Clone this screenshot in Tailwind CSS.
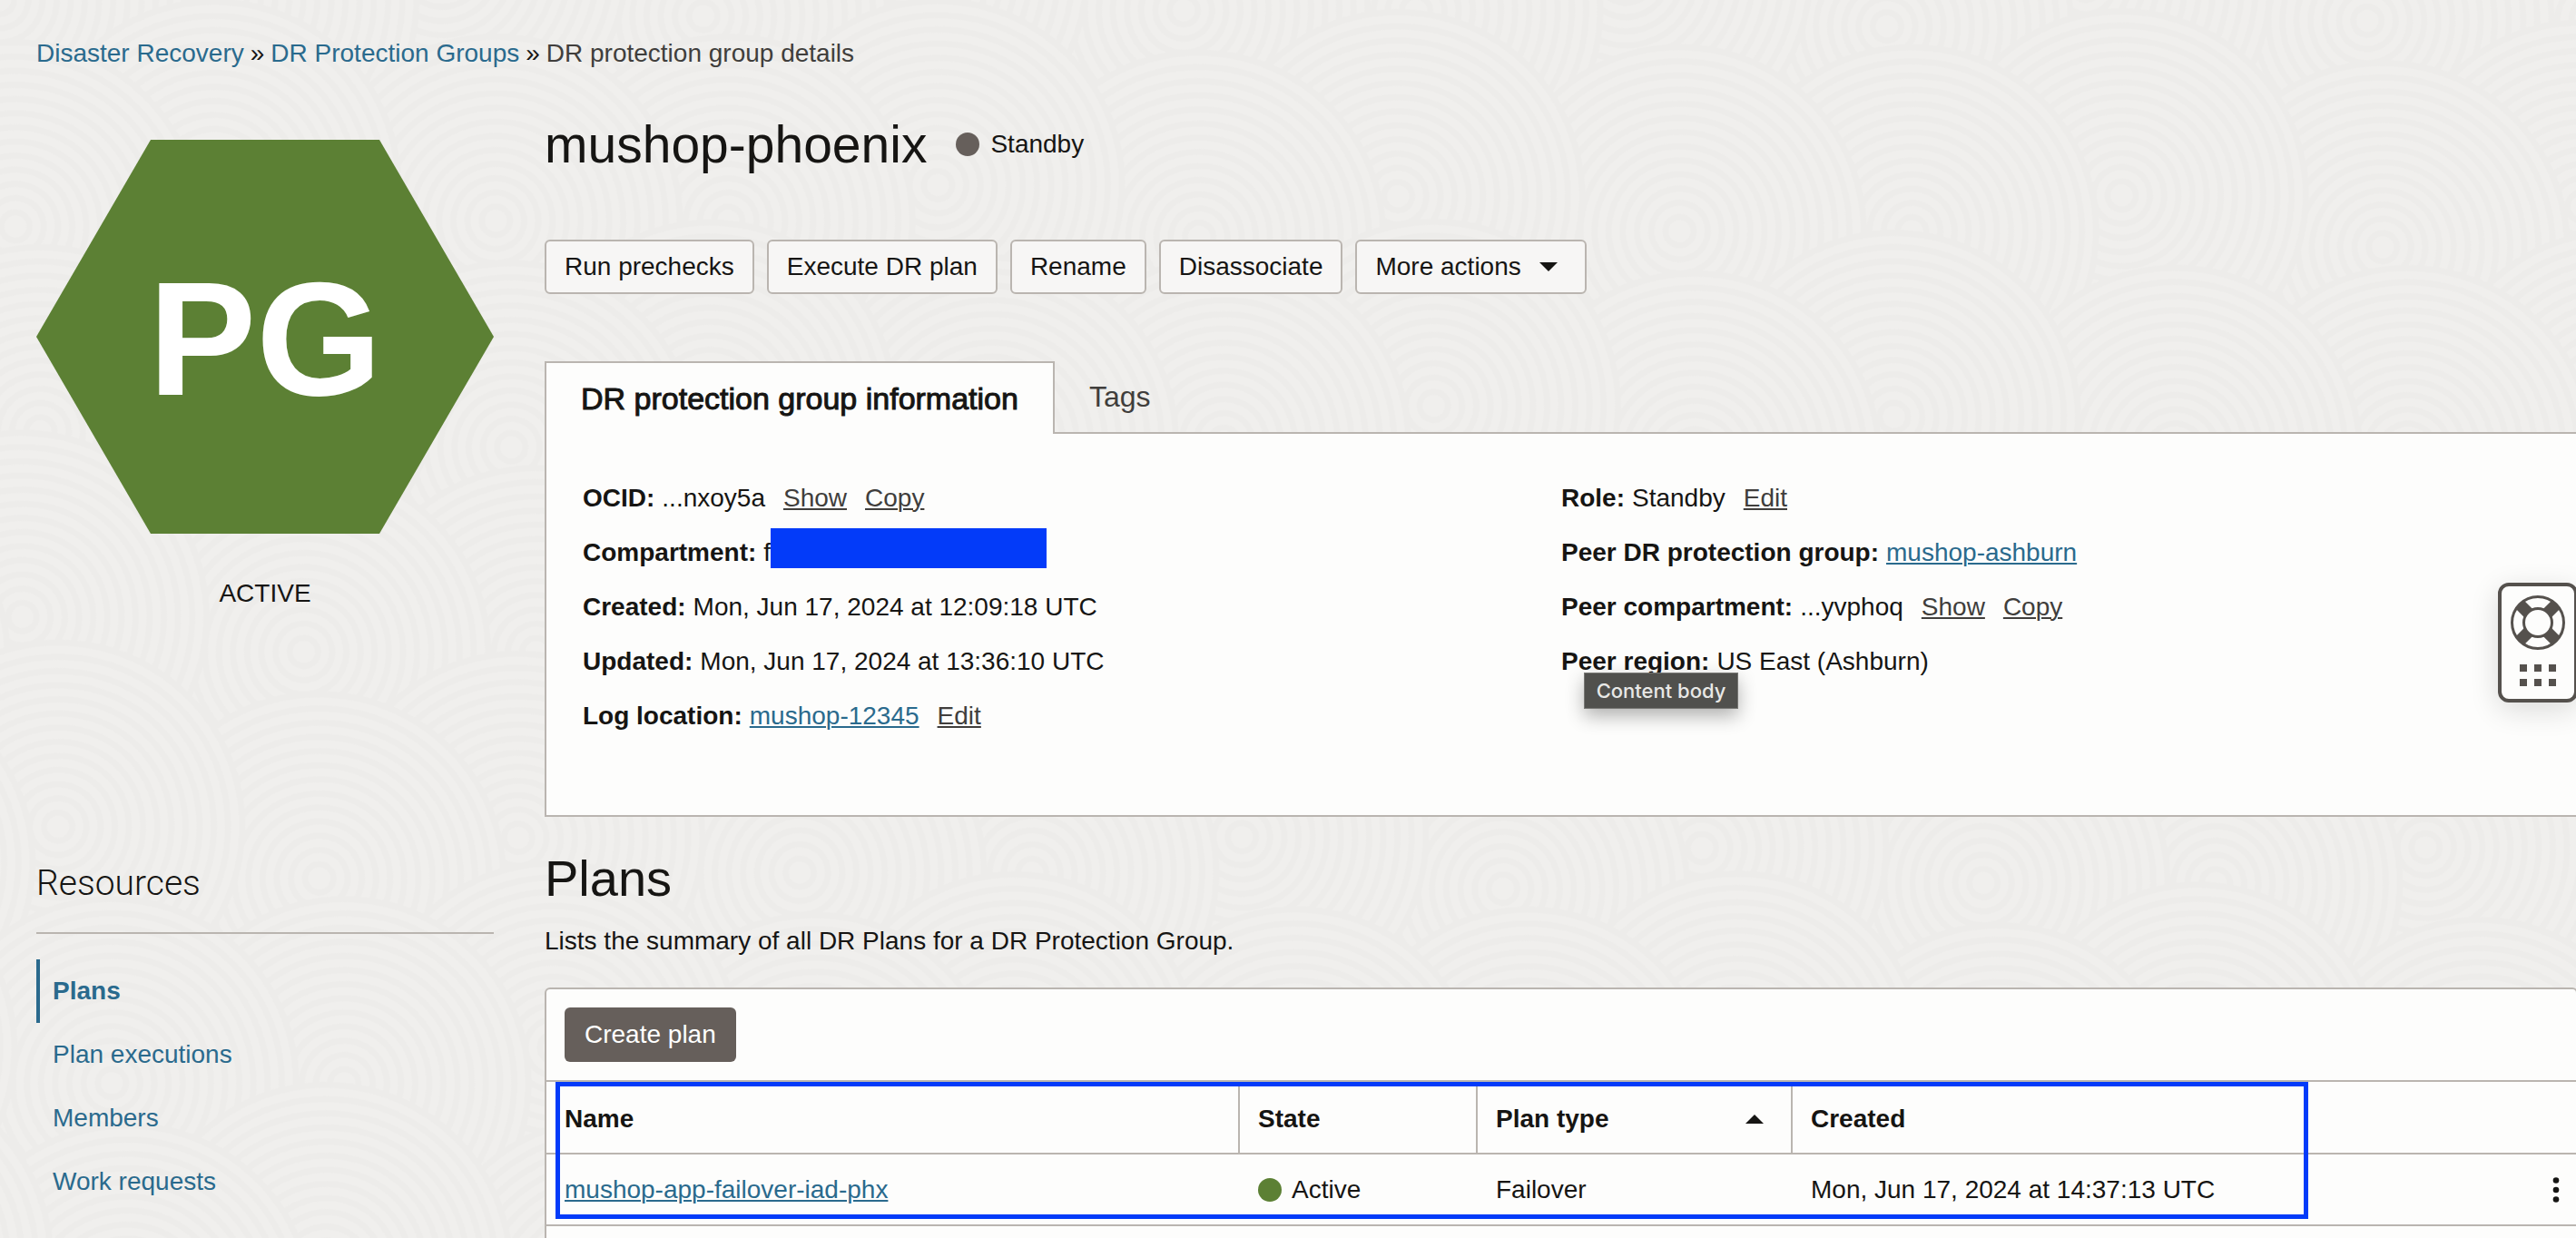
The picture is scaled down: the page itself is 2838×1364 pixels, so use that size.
<!DOCTYPE html>
<html lang="en">
<head>
<meta charset="utf-8">
<title>DR protection group details</title>
<script src="https://cdn.jsdelivr.net/npm/@tailwindcss/browser@4"></script>
</head>
<body class="bg-[#f0efed] text-[#161513] text-[28px] leading-10 font-['Helvetica_Neue','Liberation_Sans',Arial,sans-serif]">
<div class="relative isolate flex min-h-screen flex-col overflow-hidden pl-10">

  <!-- Page texture: overlapping discs of faint rings -->
  <svg class="absolute inset-0 -z-10 h-full w-full" aria-hidden="true">
    <defs>
      <g id="disc" fill="#f0efed" stroke="#edecea" stroke-width="5">
        <circle r="156"/><circle r="144"/><circle r="132"/><circle r="120"/><circle r="108"/><circle r="96"/><circle r="84"/><circle r="72"/><circle r="60"/><circle r="48"/><circle r="36"/><circle r="24"/><circle r="12"/>
      </g>
      <pattern id="rings" width="460" height="400" patternUnits="userSpaceOnUse" patternTransform="rotate(24) scale(1.3)">
        <use href="#disc" x="0" y="0"/><use href="#disc" x="460" y="0"/>
        <use href="#disc" x="230" y="70"/>
        <use href="#disc" x="90" y="170"/><use href="#disc" x="550" y="170"/>
        <use href="#disc" x="330" y="220"/><use href="#disc" x="-130" y="220"/>
        <use href="#disc" x="180" y="320"/>
        <use href="#disc" x="0" y="400"/><use href="#disc" x="460" y="400"/>
        <use href="#disc" x="230" y="470"/>
      </pattern>
    </defs>
    <rect width="100%" height="100%" fill="url(#rings)"/>
  </svg>

  <nav aria-label="Breadcrumb" class="mt-[39px]">
    <ol class="flex gap-[7px]">
      <li><a href="#" class="text-[#2a6a8d]">Disaster Recovery</a></li>
      <li aria-hidden="true">»</li>
      <li><a href="#" class="text-[#2a6a8d]">DR Protection Groups</a></li>
      <li aria-hidden="true">»</li>
      <li class="text-[#403e3c]">DR protection group details</li>
    </ol>
  </nav>

  <div class="mt-12 grid flex-1 grid-cols-[504px_1fr] gap-14">
    <aside>
      <svg class="mt-[27px] block h-[434px] w-full" viewBox="0 0 504 434" role="img" aria-label="PG">
        <path d="M126 0H378L504 217L378 434H126L0 217Z" fill="#5c8034"/>
        <text x="252" y="281" text-anchor="middle" font-size="178" font-weight="700" fill="#fff">PG</text>
      </svg>
      <p class="mt-[46px] text-center">ACTIVE</p>

      <h2 class="mt-[275px] border-b-2 border-[#bab5b0] pb-[30px] font-['Roboto',sans-serif] text-[39px] leading-12 font-light">Resources</h2>
      <nav aria-label="Resources" class="mt-7 flex flex-col text-[#2a6a8d]">
        <a href="#" aria-current="page" class="border-l-4 border-[#2a6a8d] pl-[14px] font-bold leading-[70px]">Plans</a>
        <a href="#" class="border-l-4 border-transparent pl-[14px] leading-[70px]">Plan executions</a>
        <a href="#" class="border-l-4 border-transparent pl-[14px] leading-[70px]">Members</a>
        <a href="#" class="border-l-4 border-transparent pl-[14px] leading-[70px]">Work requests</a>
      </nav>
    </aside>

    <main class="-mr-[2px] flex min-w-0 flex-col">
      <div class="flex items-center gap-8">
        <h1 class="text-[57px] leading-16">mushop-phoenix</h1>
        <p class="flex items-center gap-3"><span class="size-[26px] rounded-full bg-[#665f5b]"></span>Standby</p>
      </div>

      <div class="mt-[73px] flex gap-[14px]">
        <button class="h-[60px] rounded-md border-2 border-[#bab5b0] bg-[#f7f6f5] px-5">Run prechecks</button>
        <button class="h-[60px] rounded-md border-2 border-[#bab5b0] bg-[#f7f6f5] px-5">Execute DR plan</button>
        <button class="h-[60px] rounded-md border-2 border-[#bab5b0] bg-[#f7f6f5] px-5">Rename</button>
        <button class="h-[60px] rounded-md border-2 border-[#bab5b0] bg-[#f7f6f5] px-5">Disassociate</button>
        <button class="flex h-[60px] items-center gap-5 rounded-md border-2 border-[#bab5b0] bg-[#f7f6f5] pr-[30px] pl-5">More actions
          <svg class="h-[10px] w-5" viewBox="0 0 20 10" aria-hidden="true"><path d="M0 0H20L10 10Z" fill="#161513"/></svg>
        </button>
      </div>

      <div role="tablist" class="relative mt-[74px] -mb-[2px] flex">
        <button role="tab" aria-selected="true" class="h-20 border-2 border-b-0 border-[#bab5b0] bg-[#fdfdfc] px-[38px] text-[34px] [-webkit-text-stroke:1px_#161513]">DR protection group information</button>
        <button role="tab" aria-selected="false" class="h-[78px] px-[38px] text-[32px] text-[#403e3c]">Tags</button>
      </div>

      <section class="grid grid-cols-2 border-2 border-[#bab5b0] bg-[#fdfdfc] px-10 pt-[41px] pb-[79px] leading-[60px]">
        <dl>
          <div class="flex gap-2"><dt class="font-bold">OCID:</dt><dd class="flex gap-5">...nxoy5a <button class="text-[#403e3c] underline decoration-2 underline-offset-2">Show</button><button class="text-[#403e3c] underline decoration-2 underline-offset-2">Copy</button></dd></div>
          <div class="flex gap-2"><dt class="font-bold">Compartment:</dt><dd class="flex">f<span class="mt-[3px] h-11 w-[304px] bg-[#033bf9]"></span></dd></div>
          <div class="flex gap-2"><dt class="font-bold">Created:</dt><dd>Mon, Jun 17, 2024 at 12:09:18 UTC</dd></div>
          <div class="flex gap-2"><dt class="font-bold">Updated:</dt><dd>Mon, Jun 17, 2024 at 13:36:10 UTC</dd></div>
          <div class="flex gap-2"><dt class="font-bold">Log location:</dt><dd class="flex gap-5"><a href="#" class="text-[#2a6a8d] underline decoration-2 underline-offset-2">mushop-12345</a><button class="text-[#403e3c] underline decoration-2 underline-offset-2">Edit</button></dd></div>
        </dl>
        <dl>
          <div class="flex gap-2"><dt class="font-bold">Role:</dt><dd class="flex gap-5">Standby <button class="text-[#403e3c] underline decoration-2 underline-offset-2">Edit</button></dd></div>
          <div class="flex gap-2"><dt class="font-bold">Peer DR protection group:</dt><dd><a href="#" class="text-[#2a6a8d] underline decoration-2 underline-offset-2">mushop-ashburn</a></dd></div>
          <div class="flex gap-2"><dt class="font-bold">Peer compartment:</dt><dd class="flex gap-5">...yvphoq <button class="text-[#403e3c] underline decoration-2 underline-offset-2">Show</button><button class="text-[#403e3c] underline decoration-2 underline-offset-2">Copy</button></dd></div>
          <div class="relative flex gap-2"><dt class="font-bold">Peer region:</dt><dd>US East (Ashburn)</dd>
            <div role="tooltip" class="absolute top-[42px] left-[25px] flex h-10 w-[170px] items-center justify-center border border-[#777774] bg-[#50504d] font-['Inter',sans-serif] text-[22px] leading-9 font-medium text-[#e8e8e6] shadow-[0_8px_20px_rgba(0,0,0,0.3)]">Content body</div>
          </div>
        </dl>
      </section>

      <h2 class="mt-9 text-[56px] leading-16">Plans</h2>
      <p class="mt-[17px]">Lists the summary of all DR Plans for a DR Protection Group.</p>

      <section class="mt-[31px] flex-1 rounded-t-md border-2 border-b-0 border-[#bab5b0] bg-[#fdfdfc]">
        <div class="border-b-2 border-[#bab5b0] p-5">
          <button class="block h-[60px] rounded-md bg-[#665f5b] px-[22px] text-white">Create plan</button>
        </div>
        <div class="relative">
          <table class="w-full table-fixed border-separate border-spacing-0 text-left">
            <colgroup><col class="w-[764px]"><col class="w-[262px]"><col class="w-[347px]"><col><col class="w-[60px]"></colgroup>
            <thead>
              <tr class="h-20">
                <th scope="col" class="border-r-2 border-b-2 border-[#bab5b0] px-5 pt-[3px]">Name</th>
                <th scope="col" class="border-r-2 border-b-2 border-[#bab5b0] px-5 pt-[3px]">State</th>
                <th scope="col" aria-sort="ascending" class="border-r-2 border-b-2 border-[#bab5b0] pt-[3px] pr-[30px] pl-5">
                  <div class="flex items-center justify-between">Plan type
                    <svg class="h-[10px] w-5" viewBox="0 0 20 10" aria-hidden="true"><path d="M0 10H20L10 0Z" fill="#161513"/></svg>
                  </div>
                </th>
                <th scope="col" class="border-b-2 border-[#bab5b0] px-5 pt-[3px]">Created</th>
                <th scope="col" class="border-b-2 border-[#bab5b0]" aria-label="Actions"></th>
              </tr>
            </thead>
            <tbody>
              <tr class="h-[79px]">
                <td class="border-b-2 border-[#bab5b0] px-5"><a href="#" class="text-[#2a6a8d] underline decoration-2 underline-offset-2">mushop-app-failover-iad-phx</a></td>
                <td class="border-b-2 border-[#bab5b0] px-5"><div class="flex items-center gap-[11px]"><span class="size-[26px] rounded-full bg-[#5c8034]"></span>Active</div></td>
                <td class="border-b-2 border-[#bab5b0] px-5">Failover</td>
                <td class="border-b-2 border-[#bab5b0] px-5">Mon, Jun 17, 2024 at 14:37:13 UTC</td>
                <td class="border-b-2 border-[#bab5b0] pr-[18px]">
                  <button aria-label="Row actions" class="ml-auto block">
                    <svg class="h-7 w-2" viewBox="0 0 8 28" fill="#161513" aria-hidden="true"><circle cx="4" cy="3.5" r="3.3"/><circle cx="4" cy="14" r="3.3"/><circle cx="4" cy="24.5" r="3.3"/></svg>
                  </button>
                </td>
              </tr>
            </tbody>
          </table>
          <div class="pointer-events-none absolute top-0 right-[295px] left-[10px] h-[151px] border-5 border-[#033bf9]"></div>
        </div>
      </section>
    </main>
  </div>

  <button aria-label="Help" class="absolute top-[642px] -right-[2px] flex h-[132px] w-[88px] flex-col items-center rounded-xl border-4 border-[#55514d] bg-[#fdfdfc] pt-[10px] shadow-[0_8px_32px_rgba(0,0,0,0.14)]">
    <svg class="h-[100px] w-[60px]" viewBox="0 0 60 100" fill="none" stroke="#55514d" aria-hidden="true">
      <path d="M9.500 9.500L50.500 50.500M50.500 9.500L9.500 50.500" stroke-width="13"/>
      <circle cx="30" cy="30" r="32" stroke="#fdfdfc" stroke-width="4"/>
      <circle cx="30" cy="30" r="28.500" stroke-width="3"/>
      <circle cx="30" cy="30" r="15.500" fill="#fdfdfc" stroke-width="3"/>
      <path d="M10 76h8v8h-8zM26 76h8v8h-8zM42 76h8v8h-8zM10 92h8v8h-8zM26 92h8v8h-8zM42 92h8v8h-8z" fill="#55514d" stroke="none"/>
    </svg>
  </button>
</div>
</body>
</html>
